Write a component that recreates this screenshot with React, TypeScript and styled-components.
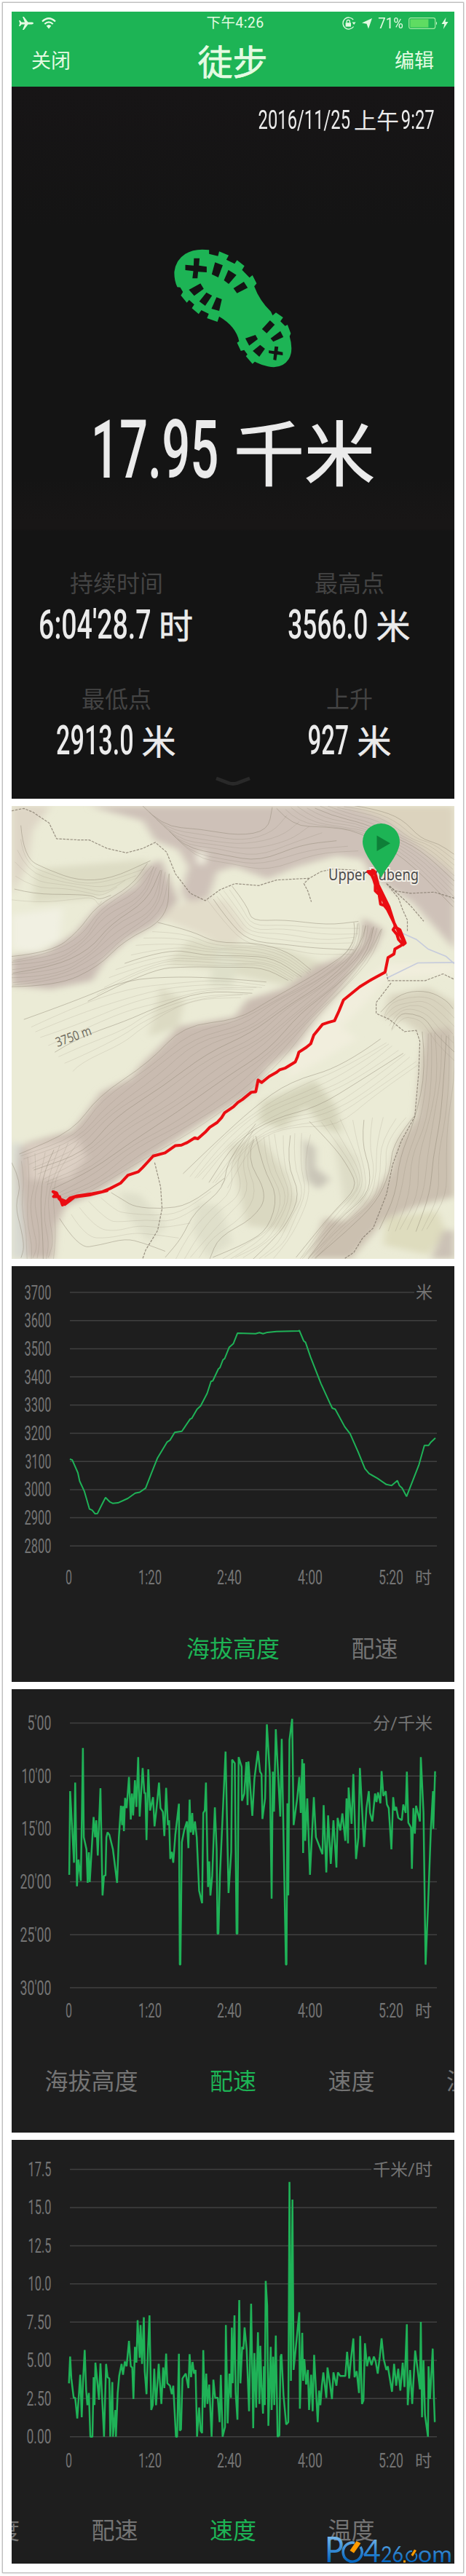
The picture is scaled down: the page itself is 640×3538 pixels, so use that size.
import type { ReactNode } from "react";
import styled, { createGlobalStyle } from "styled-components";

const GREEN = "#1db455";
const SANS = `"Noto Sans CJK SC", "Noto Sans", sans-serif`;
const NUMERIC = `Roboto, "Noto Sans CJK SC", sans-serif`;

const ALTITUDE =
  "235,716 243,719 262,765 268,795 284,832 301,895 310,899 320,912 328,911 340,885 355,854 370,870 380,875 397,873 430,857 455,838 470,835 490,820 510,765 530,712 562,655 572,648 588,620 612,616 640,572 645,570 663,537 675,525 697,480 710,437 716,435 735,392 740,388 750,360 756,355 771,315 785,302 799,264 860,266 873,262 885,266 900,261 930,258 1005,256 1007,254 1022,292 1028,297 1045,350 1080,445 1110,515 1118,533 1128,537 1160,600 1178,625 1205,690 1228,750 1242,768 1270,785 1300,807 1318,811 1337,793 1344,811 1353,820 1368,850 1390,790 1410,735 1428,667 1442,667 1450,655 1465,640";

const PACE =
  "233,795 236,450 249,745 253,415 259,842 264,732 272,820 279,272 282,640 291,690 295,828 299,702 302,825 310,660 315,557 320,640 324,570 329,715 338,438 345,880 350,800 355,797 358,640 362,620 368,630 380,690 394,828 400,640 407,510 411,590 414,512 417,615 421,478 426,520 434,392 440,567 444,460 448,550 454,405 459,515 465,310 470,555 480,355 486,460 489,455 493,652 499,360 505,530 515,475 520,595 526,530 535,415 540,520 548,535 553,635 559,437 565,590 569,570 573,730 578,700 583,745 590,630 602,502 605,1165 607,1165 612,660 620,610 629,575 634,685 638,485 642,620 647,540 650,630 656,575 662,640 670,860 680,912 684,540 689,530 693,415 700,845 704,740 708,880 714,800 723,517 729,690 732,1037 735,1037 740,800 742,745 759,287 769,870 778,700 781,320 790,335 796,1037 799,1037 803,310 813,350 814,490 822,460 829,330 833,508 836,328 849,552 856,400 868,285 875,370 880,380 883,565 892,480 898,175 908,380 914,893 918,370 922,535 928,195 943,555 948,235 962,1165 964,1165 967,500 970,880 974,240 983,152 988,590 1000,480 1007,392 1012,540 1017,318 1020,705 1023,335 1027,655 1034,480 1043,795 1056,475 1063,640 1085,710 1089,508 1098,785 1104,550 1113,750 1122,570 1132,765 1136,560 1145,612 1152,542 1162,655 1166,480 1171,665 1173,435 1183,585 1189,380 1198,730 1206,640 1211,355 1225,680 1233,520 1241,450 1245,540 1253,575 1262,460 1267,495 1272,455 1280,500 1284,368 1290,470 1298,450 1302,505 1308,520 1317,690 1323,475 1328,530 1333,515 1340,560 1352,570 1357,505 1365,540 1369,370 1374,580 1383,600 1386,770 1391,520 1396,625 1400,510 1406,540 1413,575 1416,310 1425,540 1432,1165 1440,930 1450,600 1457,450 1458,605 1464,368";

const SPEED =
  "232,1000 236,890 240,980 248,1060 253,1060 260,1145 270,965 275,1140 279,1000 285,863 290,1030 294,1090 299,1040 304,1220 311,1220 315,975 318,1090 321,915 328,1000 333,1068 338,918 350,1220 357,920 362,975 368,980 371,1220 378,995 380,1220 388,1110 390,1220 396,1040 401,970 409,920 414,965 420,910 426,930 434,825 440,930 445,935 449,1065 454,850 459,915 463,740 470,895 473,760 478,920 484,728 487,950 493,1045 498,860 503,720 509,1110 514,1090 519,940 525,1090 534,920 543,1085 549,935 553,1020 559,878 563,1000 572,1010 578,1045 583,1010 592,1220 596,1220 602,878 605,1195 609,1190 614,980 625,960 634,1020 638,880 643,975 648,912 653,960 658,945 663,1220 670,1100 675,1195 680,1205 684,863 689,1100 694,960 698,1085 704,1005 712,1220 718,985 724,1060 733,1060 739,1160 743,965 749,1220 757,1180 760,760 766,1165 772,960 777,1060 780,770 783,1000 789,720 793,1040 799,1150 805,657 809,1000 815,850 819,860 823,770 830,860 838,1115 845,672 852,1185 856,875 862,1100 865,920 868,790 873,1085 876,845 880,1010 885,1125 888,930 891,1090 894,578 899,680 903,1175 911,850 914,1110 919,890 923,1090 928,803 934,1220 940,1215 944,890 947,880 954,1050 963,1170 970,1160 974,170 979,990 984,243 988,945 998,820 1007,707 1009,1105 1017,792 1020,990 1024,900 1030,1005 1036,945 1040,1110 1047,965 1052,1115 1057,883 1069,1160 1074,1030 1078,1090 1083,1010 1088,955 1098,1060 1102,935 1110,1000 1117,1065 1122,955 1132,1010 1137,955 1145,970 1162,970 1168,870 1175,980 1180,910 1189,815 1193,975 1200,950 1208,1040 1212,805 1218,1085 1223,1070 1228,835 1235,930 1242,890 1250,925 1258,890 1264,910 1271,960 1278,890 1284,815 1291,900 1300,945 1305,930 1319,1035 1326,920 1333,1010 1340,940 1347,1030 1355,915 1361,1015 1369,757 1372,1090 1380,945 1387,1085 1397,865 1405,940 1413,1025 1416,747 1420,1140 1425,905 1430,1130 1440,1220 1442,930 1447,1065 1456,857 1460,1060 1463,1160";

const TIME_TICKS: [string, number, number][] = [
  ["0", 74, 9],
  ["1:20", 174, 32],
  ["2:40", 282, 34],
  ["4:00", 393, 34],
  ["5:20", 504, 34],
];

interface Series {
  height: number;
  plotHeight: number;
  top: number;
  step: number;
  labels: string[];
  labelWidths: number[];
  unit: string;
  unitX: number;
  timeY: number;
  trace: string;
  traceY: number;
  traceScale: number;
  stroke: number;
  tabs: string[];
  active: number;
  tabOffset: number;
}

const CHARTS: Series[] = [
  {
    height: 571,
    plotHeight: 485,
    top: 36,
    step: 38.7,
    labels: ["3700", "3600", "3500", "3400", "3300", "3200", "3100", "3000", "2900", "2800"],
    labelWidths: [37, 37, 37, 37, 37, 37, 36, 37, 37, 37],
    unit: "米",
    unitX: 555,
    timeY: 437,
    trace: ALTITUDE,
    traceY: -9,
    traceScale: 2.613,
    stroke: 2,
    tabs: ["海拔高度", "配速"],
    active: 0,
    tabOffset: 240,
  },
  {
    height: 609,
    plotHeight: 498,
    top: 46.5,
    step: 72.7,
    labels: ["5'00", "10'00", "15'00", "20'00", "25'00", "30'00"],
    labelWidths: [33, 41, 41, 43, 43, 43],
    unit: "分/千米",
    unitX: 496,
    timeY: 451,
    trace: PACE,
    traceY: -10,
    traceScale: 3,
    stroke: 2.5,
    tabs: ["海拔高度", "配速", "速度", "温度"],
    active: 1,
    tabOffset: 45.5,
  },
  {
    height: 582,
    plotHeight: 496,
    top: 40.5,
    step: 52.45,
    labels: ["17.5", "15.0", "12.5", "10.0", "7.50", "5.00", "2.50", "0.00"],
    labelWidths: [32, 32, 32, 32, 34, 34, 34, 34],
    unit: "千米/时",
    unitX: 496,
    timeY: 450,
    trace: SPEED,
    traceY: 1,
    traceScale: 3,
    stroke: 2.5,
    tabs: ["海拔高度", "配速", "速度", "温度"],
    active: 2,
    tabOffset: -117,
  },
];

type Line = [number, number][];

// contour lines spread evenly between two edges with the same number of points
function contours(a: Line, b: Line, count: number): Line[] {
  return Array.from({ length: count }, (_, i) => {
    const t = i / (count - 1);
    return a.map(([x, y], j) => {
      const wobble = Math.sin(i * 1.7 + j * 2.3) * 5;
      return [x + (b[j][0] - x) * t + wobble, y + (b[j][1] - y) * t + wobble] as [number, number];
    });
  });
}

function smooth(line: Line) {
  let d = `M${line[0][0]} ${line[0][1]}`;
  for (let i = 1; i < line.length - 1; i++) {
    const [x, y] = line[i];
    const [nx, ny] = line[i + 1];
    d += `Q${x} ${y} ${(x + nx) / 2} ${(y + ny) / 2}`;
  }
  const last = line[line.length - 1];
  return `${d}L${last[0]} ${last[1]}`;
}

const CONTOUR_SETS: { a: Line; b: Line; count: number; strong?: boolean }[] = [
  {
    a: [[39, 670], [170, 650], [270, 570], [320, 460], [440, 380], [500, 290]],
    b: [[39, 800], [190, 790], [330, 710], [420, 610], [560, 510], [570, 330]],
    count: 11,
    strong: true,
  },
  {
    a: [[1190, 530], [1200, 620], [1080, 740], [900, 850], [800, 930], [620, 960], [500, 1100], [330, 1250], [250, 1390], [60, 1480]],
    b: [[1290, 560], [1260, 660], [1150, 810], [1060, 930], [940, 1100], [820, 1250], [640, 1400], [480, 1500], [340, 1620], [220, 1690]],
    count: 15,
    strong: true,
  },
  {
    a: [[480, 50], [540, 130], [680, 150], [800, 170], [900, 150], [920, 60]],
    b: [[600, 190], [650, 260], [780, 290], [900, 320], [1060, 240], [1210, 240]],
    count: 8,
    strong: true,
  },
  {
    a: [[930, 60], [980, 130], [1100, 140], [1200, 150], [1360, 260], [1528, 470]],
    b: [[1180, 50], [1260, 60], [1350, 100], [1420, 190], [1470, 200], [1528, 250]],
    count: 11,
    strong: true,
  },
  {
    a: [[530, 530], [640, 560], [730, 620], [860, 610], [970, 650], [1050, 730]],
    b: [[300, 860], [500, 720], [640, 710], [760, 720], [880, 710], [970, 770]],
    count: 11,
  },
  {
    a: [[80, 930], [250, 850], [430, 770], [600, 750], [760, 760], [900, 780]],
    b: [[240, 1140], [270, 1110], [420, 1030], [470, 960], [640, 850], [810, 840]],
    count: 9,
  },
  {
    a: [[70, 130], [75, 260], [170, 320], [260, 355], [370, 350], [510, 280]],
    b: [[39, 440], [130, 450], [250, 430], [320, 430], [330, 460], [340, 440]],
    count: 7,
  },
  {
    a: [[780, 380], [830, 460], [850, 530], [950, 515], [1100, 540], [1210, 530]],
    b: [[700, 440], [760, 540], [830, 620], [960, 640], [1050, 660], [1180, 660]],
    count: 7,
  },
  {
    a: [[1280, 1010], [1150, 1120], [980, 1190], [850, 1290], [720, 1440], [620, 1570]],
    b: [[1410, 1110], [1270, 1240], [1130, 1370], [980, 1370], [860, 1430], [760, 1620]],
    count: 10,
  },
  {
    a: [[860, 1410], [880, 1540], [940, 1660], [900, 1790], [830, 1850], [720, 1915]],
    b: [[1040, 1400], [1020, 1520], [1050, 1640], [1000, 1760], [970, 1850], [920, 1915]],
    count: 9,
  },
  {
    a: [[860, 1360], [760, 1500], [760, 1630], [650, 1720], [610, 1830], [560, 1915]],
    b: [[850, 1420], [830, 1500], [900, 1650], [850, 1750], [740, 1830], [700, 1915]],
    count: 6,
  },
  {
    a: [[1040, 1350], [1120, 1450], [1180, 1550], [1200, 1620], [1120, 1720], [1000, 1915]],
    b: [[1400, 1330], [1320, 1430], [1310, 1560], [1270, 1690], [1160, 1800], [1060, 1915]],
    count: 11,
  },
  {
    a: [[1420, 980], [1430, 1130], [1400, 1350], [1340, 1500], [1330, 1650], [1280, 1800]],
    b: [[1528, 1000], [1528, 1130], [1510, 1340], [1500, 1500], [1500, 1650], [1440, 1800]],
    count: 8,
    strong: true,
  },
  {
    a: [[1280, 900], [1300, 860], [1370, 820], [1440, 810], [1500, 850], [1528, 890]],
    b: [[1320, 980], [1350, 920], [1390, 920], [1430, 950], [1460, 1020], [1528, 1100]],
    count: 7,
  },
  {
    a: [[39, 1520], [70, 1600], [55, 1700], [70, 1800], [80, 1870], [75, 1917]],
    b: [[260, 1430], [200, 1540], [180, 1650], [180, 1750], [190, 1840], [180, 1917]],
    count: 9,
    strong: true,
  },
  {
    a: [[200, 1750], [260, 1870], [340, 1865], [420, 1830], [480, 1850], [560, 1890]],
    b: [[370, 1640], [420, 1680], [450, 1700], [540, 1710], [640, 1700], [750, 1580]],
    count: 6,
  },
];

const TRAILS = [
  "39,70 80,60 110,75 165,120 190,185 265,190 300,190 360,225 425,243 480,225 522,200 560,240 590,330 640,410 690,440 740,395 790,370 870,378 930,355 1040,348 1080,320 1120,310 1200,315",
  "1040,348 1022,370 1035,400 1047,445",
  "1300,740 1305,770 1430,770 1490,742 1528,765",
  "1315,780 1265,860 1265,905 1310,930 1360,980 1400,975 1412,1020 1408,1150 1395,1330 1350,1430 1320,1530 1300,1650 1255,1790 1220,1830 1190,1890 1160,1915",
  "520,1520 540,1620 545,1710 530,1800 490,1880 480,1915",
  "1300,370 1330,400 1380,410 1460,405 1528,430",
  "1300,370 1340,430 1355,480 1370,520 1370,570",
  "1310,380 1380,460 1425,525",
];

const ROUTE =
  "1240,325 1255,315 1252,335 1262,375 1262,400 1275,415 1280,455 1292,460 1305,480 1330,545 1322,560 1335,580 1340,600 1356,622 1363,615 1345,560 1330,550 1308,465 1272,375 1260,320 1237,320 1250,335 1300,470 1345,580 1360,615 1345,628 1328,640 1325,660 1305,675 1295,735 1250,765 1210,795 1155,850 1140,895 1125,935 1105,942 1085,950 1055,995 1045,1030 1030,1045 1005,1065 1000,1085 993,1105 960,1130 940,1138 930,1148 905,1165 880,1190 868,1180 860,1228 845,1230 815,1260 800,1272 785,1290 755,1315 745,1335 730,1355 705,1375 690,1395 665,1422 655,1418 630,1437 610,1448 590,1450 555,1480 515,1493 495,1520 480,1540 465,1558 430,1572 405,1605 370,1627 345,1640 310,1648 260,1657 235,1666 215,1690 198,1668 190,1645 178,1640 188,1650 180,1660 200,1660 210,1695 222,1680 205,1672 218,1692 250,1662 300,1654 360,1636";

const GlobalStyle = createGlobalStyle`
  body {
    margin: 0;
    background: #fff;
    font-family: ${SANS};
  }
`;

const Frame = styled.main`
  box-sizing: border-box;
  width: 634px;
  height: 3531px;
  margin: 3px;
  padding: 12px;
  border: 1px solid #bdbdbd;
  box-shadow: 0 0 2px #b0b0b0;
  display: flex;
  flex-direction: column;
  gap: 10px;
`;

const Summary = styled.section`
  height: 1081px;
  display: flex;
  flex-direction: column;
  background: linear-gradient(#171516 103px, #141414 300px, #141414 640px, #181616 700px, #181616 710px, #141414 714px);
  color: #ebebeb;
`;

const Header = styled.header`
  height: 103px;
  background: ${GREEN};
  color: #e4fbe2;
`;

const StatusBar = styled.div`
  height: 32px;
  padding: 0 8px 0 10px;
  display: grid;
  grid-template-columns: 1fr auto 1fr;
  align-items: center;
  font: 19.5px/32px ${NUMERIC};
`;

const StatusGroup = styled.div<{ $end?: boolean }>`
  display: flex;
  align-items: center;
  justify-content: ${(p) => (p.$end ? "flex-end" : "flex-start")};
  gap: ${(p) => (p.$end ? "5px" : "11px")};
  svg {
    flex: none;
  }
`;

const Clock = styled.span`
  padding-left: 4px;
  letter-spacing: 0.4px;
  white-space: nowrap;
`;

const NavBar = styled.nav`
  height: 71px;
  box-sizing: border-box;
  padding: 0 28px 4px 27px;
  display: flex;
  align-items: center;
  justify-content: space-between;
`;

const NavButton = styled.button`
  padding: 0;
  border: 0;
  background: none;
  color: inherit;
  font: 27px/40px ${SANS};
`;

const Title = styled.h1`
  margin: 0;
  font: 400 48px/60px ${SANS};
  -webkit-text-stroke: 0.7px;
`;

const DateRow = styled.div`
  height: 30px;
  margin-top: 31px;
  padding-right: 27px;
  display: flex;
  align-items: center;
  justify-content: flex-end;
  font: 31px/30px ${SANS};
`;

const Meridiem = styled.span`
  margin: -3px 2px 0 8px;
`;

const Boot = styled.svg`
  width: 162px;
  height: 163px;
  margin: 162px 0 0 223px;
`;

const Distance = styled.div`
  height: 97px;
  margin-top: 65px;
  padding-left: 113px;
  display: flex;
  align-items: center;
  gap: 24px;
`;

const DistanceUnit = styled.span`
  margin-top: -5px;
  font: 400 97px/97px ${SANS};
  -webkit-text-stroke: 1.2px;
`;

const Stats = styled.dl`
  margin: 116px 0 0;
  display: grid;
  grid-template-columns: 288px 288px;
  column-gap: 32px;
  row-gap: 60px;
`;

const Stat = styled.div`
  display: flex;
  flex-direction: column;
  align-items: center;
  gap: 19px;
`;

const StatLabel = styled.dt`
  color: #434343;
  font: 32px/32px ${SANS};
`;

const StatValue = styled.dd`
  height: 48px;
  margin: 0;
  display: flex;
  align-items: center;
  gap: 12px;
`;

const StatUnit = styled.span`
  margin-top: -3px;
  font: 400 47px/48px ${SANS};
  -webkit-text-stroke: 0.6px;
`;

const Chevron = styled.svg`
  width: 50px;
  height: 14px;
  margin: 25px auto 0;
`;

const NumeralBox = styled.span<{ $size: number; $width: number; $weight: number }>`
  width: ${(p) => p.$width}px;
  flex: none;
  display: inline-flex;
  justify-content: center;
  font: ${(p) => p.$weight} ${(p) => p.$size}px/1 ${NUMERIC};
`;

const Squeezed = styled.span<{ $scale: number }>`
  flex: none;
  white-space: nowrap;
  transform: scaleX(${(p) => p.$scale});
`;

const MapCard = styled.section`
  height: 622px;
  overflow: hidden;
  svg {
    display: block;
  }
`;

const ChartCard = styled.section<{ $height: number }>`
  height: ${(p) => p.$height}px;
  overflow: hidden;
  background: #1e1e1e;
`;

const Plot = styled.svg`
  display: block;
  text {
    font-family: ${NUMERIC};
    fill: #747474;
  }
`;

const Tabs = styled.div<{ $offset: number }>`
  box-sizing: border-box;
  height: 80px;
  margin-left: ${(p) => p.$offset}px;
  padding-bottom: 5px;
  display: flex;
  align-items: center;
  gap: 98.5px;
`;

const Tab = styled.span<{ $active: boolean }>`
  flex: none;
  color: ${(p) => (p.$active ? GREEN : "#747474")};
  font: 32px/40px ${SANS};
`;

const ChartArea = styled.div`
  position: relative;
`;

const Watermark = styled.svg`
  position: absolute;
  right: 2px;
  bottom: 0;
`;

function Numerals({ size, width, scale, weight = 400, children }: { size: number; width: number; scale: number; weight?: number; children: ReactNode }) {
  return (
    <NumeralBox $size={size} $width={width} $weight={weight}>
      <Squeezed $scale={scale}>{children}</Squeezed>
    </NumeralBox>
  );
}

function StatItem({ label, value, width, scale, unit }: { label: string; value: string; width: number; scale: number; unit: string }) {
  return (
    <Stat>
      <StatLabel>{label}</StatLabel>
      <StatValue>
        <Numerals size={56} width={width} scale={scale} weight={500}>
          {value}
        </Numerals>
        <StatUnit>{unit}</StatUnit>
      </StatValue>
    </Stat>
  );
}

function BootIcon() {
  return (
    <Boot viewBox="586 126 397 489" preserveAspectRatio="none">
      <path
        fill={GREEN}
        d="M704 130 L704 146 L734 155 L738 136 L770 152 L762 170 L790 187 L798 172 L823 196 L815 212 L840 244 L850 234 L864 268 L856 280 Q874 340 912 384 L918 400 L929 388 L953 408 L944 424 L960 443 L968 438 L979 474 L975 486 Q989 545 972 580 Q950 622 902 610 Q880 604 864 594 L858 590 L850 599 L828 568 L833 560 L822 542 L811 546 L798 512 L805 506 Q795 445 738 404 L732 426 L697 411 L703 393 L678 378 L669 394 L646 370 L654 355 L637 336 L629 347 L609 317 L616 303 L607 284 L597 283 Q586 255 587 220 Q592 170 624 146 Q655 122 704 130Z"
      />
      <g fill="#141414">
        <path d="M653 164H672L670 194L696 199V222L667 220L665 247H648L651 217L624 213V191L652 194Z" />
        <path d="M724 181L750 193L735 243L713 230Z" />
        <path d="M769 212L796 233L770 270L754 255Z" />
        <path d="M821 261L834 286L798 308L786 288Z" />
        <path d="M675 268L686 290L654 319L636 294Z" />
        <path d="M695 305L714 318L691 360L671 342Z" />
        <path d="M729 325L747 333L738 381L712 372Z" />
        <path d="M909 420L925 438L898 473L882 456Z" />
        <path d="M944 464L954 489L920 508L911 494Z" />
        <path d="M860 480L868 497L839 524L826 494Z" />
        <path d="M876 521L892 537L873 570L851 546Z" />
        <path d="M925 527L937 529L935 547L952 551V564L933 561L930 585L920 582L922 559L905 555V544L923 547Z" />
      </g>
    </Boot>
  );
}

function StatusIcons() {
  return (
    <StatusGroup $end>
      <svg width="20" height="20" viewBox="0 0 20 20" fill="none" stroke="currentColor" strokeWidth="1.3">
        <path d="M16.2 5A8 8 0 1 0 16.6 14.5" />
        <path d="M14.6 8.5h5l-2.5 3.6z" fill="currentColor" stroke="none" />
        <path d="M5.6 9.2h7.4v5.4H5.6z" fill="currentColor" stroke="none" />
        <path d="M7.2 9.5V7.6a2.1 2.1 0 0 1 4.2 0v1.9" />
      </svg>
      <svg width="19" height="16" viewBox="0 0 19 16">
        <path d="M17 1L12 15.500L9.600 8.800L3 7.600Z" fill="currentColor" />
      </svg>
      <Numerals size={20} width={38} scale={0.93}>
        71%
      </Numerals>
      <svg width="40" height="16" viewBox="0 0 40 16">
        <rect x="0.7" y="0.7" width="36" height="14.6" rx="2.5" fill="none" stroke="#a5eaa2" strokeWidth="1.2" />
        <rect x="2.4" y="2.4" width="25" height="11.2" fill="#5fdc62" />
        <path d="M38 5.5q2 2.5 0 5z" fill="#e4fbe2" />
      </svg>
      <svg width="10" height="16" viewBox="0 0 10 16">
        <path d="M6.5 0L0.5 9H4.3L2.8 16L9.5 6H5.5Z" fill="currentColor" />
      </svg>
    </StatusGroup>
  );
}

function TrackMap() {
  return (
    <MapCard>
      <svg width="608" height="622">
        <defs>
          <filter id="soft" x="-5%" y="-5%" width="110%" height="110%">
            <feGaussianBlur stdDeviation="13" />
          </filter>
        </defs>
        <svg width="608" height="622" viewBox="39 50 1489 1867" preserveAspectRatio="none">
          <path fill="#ebebd6" d="M39 50H1528V1917H39Z" />
          <g filter="url(#soft)">
            <path fill="#ded6c6" d="M39 50H170L110 150L90 300L39 420Z" />
            <path fill="#cec1b8" d="M300 50L480 110L520 190L600 230L635 300L610 400L630 450L700 430L730 320L790 300L900 350L1000 300L1130 255L1220 270L1250 340L1390 450L1528 640V50Z" />
            <path fill="#dcd3be" d="M1180 50L1300 110L1430 240L1528 330V50Z" />
            <path fill="#e2dcc9" d="M520 500L640 440L760 440L830 560L780 640L640 560Z" />
            <path fill="#dddcc4" d="M120 310L500 270L470 360L330 430L110 450Z" />
            <path fill="#c9bbb2" d="M39 670L150 655L250 575L330 465L460 375L480 310L540 270L600 440L520 540L430 600L350 690L310 770L170 805L39 790Z" />
            <path fill="#dddcc4" d="M640 600L960 640L1090 700L960 790L700 720L560 700Z" />
            <path fill="#dcdac3" d="M540 800L620 850L600 960L500 1000Z" />
            <path fill="#dedfc9" d="M740 620L800 700L780 800L700 790Z" />
            <path fill="#c9bbb0" d="M1220 510L1215 620L1160 670L1060 710L960 800L830 850L790 920L600 960L540 1040L480 1110L440 1170L340 1230L280 1330L240 1390L90 1440L39 1490V1917H180L190 1780L220 1700L330 1640L420 1570L500 1500L600 1420L700 1340L850 1230L900 1130L1000 1040L1060 930L1130 830L1200 710L1260 640L1290 560Z" />
            <path fill="#d8dad2" d="M39 1440H70L60 1560L90 1917H39Z" />
            <path fill="#ddd0c4" d="M90 1450L260 1420L290 1500L230 1590L100 1590Z" />
            <path fill="#dfdfca" d="M400 1640L470 1650L560 1780L500 1850L430 1740Z" />
            <path fill="#dfdfca" d="M660 1680L740 1700L780 1850L700 1917L650 1800Z" />
            <path fill="#d5d4bb" d="M880 1270L1060 1180L1130 1290L1150 1400L1090 1380L1030 1290L950 1380L870 1350Z" />
            <path fill="#dad8c1" d="M770 1450L880 1420L960 1560L1000 1680L960 1800L830 1780Z" />
            <path fill="#c9c5b7" d="M1020 1420L1060 1460L1060 1540L1110 1590L1070 1630L1030 1590Z" />
            <path fill="#dddcc6" d="M1120 1400L1200 1500L1230 1680L1160 1700Z" />
            <path fill="#d8d3be" d="M1310 830L1440 800L1528 860V1000L1430 1000L1360 940L1290 920Z" />
            <path fill="#cbc0b0" d="M1430 980L1528 960V1660L1400 1700L1290 1760L1180 1917H1040L1060 1850L1090 1750L1160 1760L1250 1660L1310 1560L1340 1430L1400 1330L1415 1100Z" />
            <path fill="#dedcbe" d="M1300 1750L1470 1720L1500 1800L1440 1900L1290 1860Z" />
            <path fill="#cbc1b5" d="M1490 1800H1528V1917H1450Z" />
            <path fill="#f1eedd" d="M1300 700L1528 700V740L1300 760L1230 860L1150 960L1200 1010L1080 1100L960 1180L1000 1040L1140 850Z" />
            <path fill="#f1f0e2" d="M39 500L210 470L200 600L120 650L39 640Z" />
            <path fill="#f3f1e1" d="M660 240L690 240L690 290L665 290Z" />
          </g>
          <g fill="none" stroke="#8d8474">
            {CONTOUR_SETS.map((set, i) =>
              contours(set.a, set.b, set.count).map((line, j) => (
                <path
                  key={`${i}-${j}`}
                  d={smooth(line)}
                  strokeOpacity={j % 5 === 0 ? 0.5 : set.strong ? 0.3 : 0.24}
                  strokeWidth={j % 5 === 0 ? 0.9 : 0.8}
                  vectorEffect="non-scaling-stroke"
                />
              ))
            )}
          </g>
          <g fill="none" stroke="#c6cbdc" strokeWidth="1.6">
            <polyline points="1345,570 1400,600 1440,640 1500,670 1528,700" vectorEffect="non-scaling-stroke" />
            <polyline points="1300,760 1350,730 1405,697 1528,695" vectorEffect="non-scaling-stroke" />
          </g>
          {TRAILS.map((points) => (
            <polyline key={points} points={points} fill="none" stroke="#83796b" strokeOpacity="0.8" strokeWidth="1.2" strokeDasharray="3.5 1.5" vectorEffect="non-scaling-stroke" />
          ))}
        </svg>
        <g fontFamily={`"Noto Sans", sans-serif`}>
          <text x="435" y="102" fontSize="21" textLength="124" lengthAdjust="spacingAndGlyphs" fill="#494949" stroke="#f2efe6" strokeWidth="4" paintOrder="stroke">
            Upper Yubeng
          </text>
          <text x="63" y="331" fontSize="18" textLength="51" lengthAdjust="spacingAndGlyphs" fill="#6f6b60" transform="rotate(-20 63 331)">
            3750 m
          </text>
        </g>
        <path d="M507.5 99C502 86 482 66 482 49A25.5 25 0 0 1 533 49C533 66 513 86 507.5 99Z" fill={GREEN} />
        <path d="M501.500 40.500V62L520 51.300Z" fill="#0e7f38" />
        <svg width="608" height="622" viewBox="39 50 1489 1867" preserveAspectRatio="none">
          <polyline points={ROUTE} fill="none" stroke="#ea0d12" strokeWidth="4" strokeLinejoin="round" strokeLinecap="round" vectorEffect="non-scaling-stroke" />
        </svg>
      </svg>
    </MapCard>
  );
}

function Chart({ series, children }: { series: Series; children?: ReactNode }) {
  const { top, step, timeY } = series;
  return (
    <ChartArea>
      <ChartCard $height={series.height}>
        <Plot width="608" height={series.plotHeight}>
          {series.labels.map((label, i) => {
            const y = top + i * step;
            return (
              <g key={label}>
                <line x1="80" x2={i === 0 ? series.unitX - 2 : 584} y1={y} y2={y} stroke="#404040" strokeWidth="1.5" />
                <text x={54.5 - series.labelWidths[i]} y={y + 9.5} fontSize="28" textLength={series.labelWidths[i]} lengthAdjust="spacingAndGlyphs">
                  {label}
                </text>
              </g>
            );
          })}
          <text x={series.unitX} y={top + 8} fontSize="23" textLength={578 - series.unitX} lengthAdjust="spacingAndGlyphs">
            {series.unit}
          </text>
          {TIME_TICKS.map(([label, x, width]) => (
            <text key={label} x={x} y={timeY} fontSize="28" textLength={width} lengthAdjust="spacingAndGlyphs">
              {label}
            </text>
          ))}
          <text x="554" y={timeY - 1} fontSize="23">
            时
          </text>
          <polyline
            points={series.trace}
            transform={`translate(-16 ${series.traceY}) scale(${1 / 2.45} ${1 / series.traceScale})`}
            fill="none"
            stroke="#1fb257"
            strokeWidth={series.stroke}
            strokeLinejoin="bevel"
            vectorEffect="non-scaling-stroke"
          />
        </Plot>
        <Tabs $offset={series.tabOffset}>
          {series.tabs.map((tab, i) => (
            <Tab key={tab} $active={i === series.active}>
              {tab}
            </Tab>
          ))}
        </Tabs>
      </ChartCard>
      {children}
    </ChartArea>
  );
}

function SiteMark() {
  return (
    <Watermark width="174" height="40" viewBox="0 0 174 40" fontFamily="Lato, sans-serif">
      <defs>
        <linearGradient id="mark" gradientUnits="userSpaceOnUse" x1="0" y1="2" x2="0" y2="38">
          <stop offset="0" stopColor="#78b9ec" />
          <stop offset="1" stopColor="#0063bd" />
        </linearGradient>
      </defs>
      <g fill="url(#mark)">
        <text x="-2" y="38" fontSize="48" textLength="26" lengthAdjust="spacingAndGlyphs">P</text>
        <text x="51" y="38" fontSize="42" textLength="24" lengthAdjust="spacingAndGlyphs">4</text>
        <text x="75" y="38" fontSize="30" textLength="31" lengthAdjust="spacingAndGlyphs">26</text>
        <text x="126" y="38" fontSize="30" textLength="47" lengthAdjust="spacingAndGlyphs">om</text>
      </g>
      <g fill="none" stroke="url(#mark)">
        <path d="M39 11.500A13 13 0 1 0 47 17" strokeWidth="3.600" />
        <path d="M118 23A7 7 0 1 0 123 26" strokeWidth="2.200" />
      </g>
      <g fill="#ff9b00">
        <path d="M41.500 9L47.500 12L38 25.500L32.500 22Z" />
        <path d="M121 20.500L124 22L119 30L116.500 28Z" />
        <path d="M106 35.500h3v3h-3z" />
      </g>
    </Watermark>
  );
}

export default function App() {
  return (
    <>
      <GlobalStyle />
      <Frame>
        <Summary>
          <Header>
            <StatusBar>
              <StatusGroup>
                <svg width="20" height="18" viewBox="0 0 20 18">
                  <path d="M20 9Q20 7.600 17.500 7.600H12.500L6.800 0H5L8 7.600H3.600L1.500 5H0L1.200 9L0 13H1.500L3.600 10.400H8L5 18H6.800L12.500 10.400H17.500Q20 10.400 20 9Z" fill="currentColor" />
                </svg>
                <svg width="20" height="16" viewBox="0 0 20 16" fill="none" stroke="currentColor" strokeWidth="2.200">
                  <path d="M1 5.500Q10 -3 19 5.500" />
                  <path d="M4.300 9Q10 3.600 15.700 9" />
                  <path d="M6.700 11.600Q10 8.500 13.300 11.600L10 15.500Z" fill="currentColor" stroke="none" />
                </svg>
              </StatusGroup>
              <Clock>下午4:26</Clock>
              <StatusIcons />
            </StatusBar>
            <NavBar>
              <NavButton>关闭</NavButton>
              <Title>徒步</Title>
              <NavButton>编辑</NavButton>
            </NavBar>
          </Header>
          <DateRow>
            <Numerals size={36} width={120} scale={0.66}>
              2016/11/25
            </Numerals>
            <Meridiem>上午</Meridiem>
            <Numerals size={36} width={47} scale={0.66}>
              9:27
            </Numerals>
          </DateRow>
          <BootIcon />
          <Distance>
            <Numerals size={111} width={168} scale={0.62} weight={500}>
              17.95
            </Numerals>
            <DistanceUnit>千米</DistanceUnit>
          </Distance>
          <Stats>
            <StatItem label="持续时间" value="6:04'28.7" width={151} scale={0.67} unit="时" />
            <StatItem label="最高点" value="3566.0" width={108} scale={0.63} unit="米" />
            <StatItem label="最低点" value="2913.0" width={104} scale={0.61} unit="米" />
            <StatItem label="上升" value="927" width={56} scale={0.59} unit="米" />
          </Stats>
          <Chevron viewBox="0 0 50 14">
            <path d="M2 3L19 9.500Q25 11.500 31 9.500L48 3" fill="none" stroke="#292929" strokeWidth="5" />
          </Chevron>
        </Summary>
        <TrackMap />
        <Chart series={CHARTS[0]} />
        <Chart series={CHARTS[1]} />
        <Chart series={CHARTS[2]}>
          <SiteMark />
        </Chart>
      </Frame>
    </>
  );
}
